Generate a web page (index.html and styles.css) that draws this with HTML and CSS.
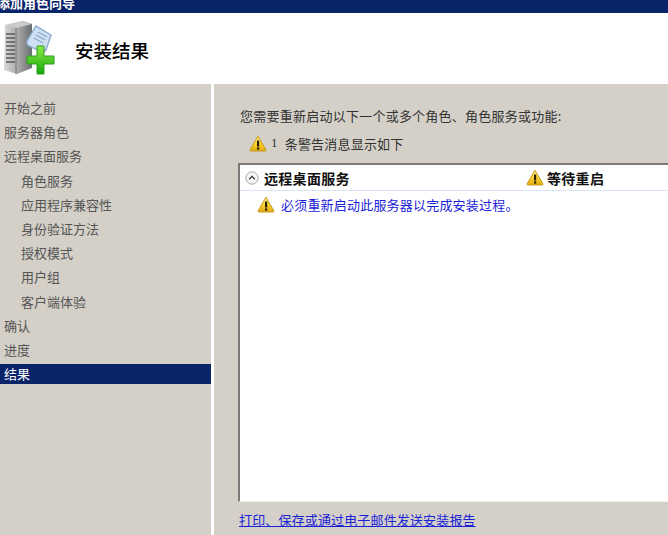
FILE: index.html
```html
<!DOCTYPE html>
<html lang="zh-CN">
<head>
<meta charset="utf-8">
<title>添加角色向导</title>
<link rel="stylesheet" href="styles.css">
</head>
<body>
<svg class="defs" width="0" height="0" aria-hidden="true">
  <defs>
    <linearGradient id="warn" x1="0" y1="0" x2="0" y2="1">
      <stop offset="0" stop-color="#fff3a0"/>
      <stop offset="0.55" stop-color="#f8d030"/>
      <stop offset="1" stop-color="#e2a910"/>
    </linearGradient>
    <symbol id="warning" viewBox="0 0 18 17">
      <path d="M9 1.2 L17 15 Q17.2 16 16 16 L2 16 Q.8 16 1 15 Z" fill="url(#warn)" stroke="#c79a18" stroke-width="1" stroke-linejoin="round"/>
      <rect x="8" y="5.5" width="2.2" height="6" fill="#2a2000"/>
      <rect x="8" y="12.4" width="2.2" height="2.2" fill="#2a2000"/>
    </symbol>
  </defs>
</svg>
<div class="window">
  <div class="titlebar"><span class="titletext">添加角色向导</span></div>
  <header class="header">
    <svg class="logo" width="54" height="56" viewBox="0 0 54 56" aria-hidden="true">
      <defs>
        <linearGradient id="srv" x1="0" y1="0" x2="1" y2="0">
          <stop offset="0" stop-color="#d8d8d8"/>
          <stop offset="0.55" stop-color="#a2a2a2"/>
          <stop offset="1" stop-color="#6a6e72"/>
        </linearGradient>
        <linearGradient id="grn" x1="0" y1="0" x2="0" y2="1">
          <stop offset="0" stop-color="#8cec44"/>
          <stop offset="1" stop-color="#14a80e"/>
        </linearGradient>
      </defs>
      <path d="M2 5 L20 1 L29 4 L29 48 L14 54 L1 50 Z" fill="url(#srv)"/>
      <path d="M2 5 L20 1 L29 4 L13 8 Z" fill="#c9cbcd"/>
      <path d="M3 14h9M3 18h9M3 22h9M3 26h9M3 30h9M3 34h9M3 38h9M3 42h9" stroke="#5a5a5a" stroke-width="1.6"/>
      <path d="M13 8 L13 54" stroke="#777" stroke-width="1"/>
      <path d="M24 21 L33 6 L48 15 L43 30 Q41 33 37 31 L26 26 Q23 24 24 21 Z" fill="#cfe0f2" stroke="#8eaacb" stroke-width="1.4"/>
      <path d="M31 18l9 5M33 15l9 5M35 12l9 5" stroke="#8eaacb" stroke-width="1.3"/>
      <path d="M34 26 h7 v10 h10 v8 h-10 v10 h-7 v-10 h-10 v-8 h10 Z" fill="url(#grn)" stroke="#2f9d1f" stroke-width="1"/>
    </svg>
    <h1 class="pagetitle">安装结果</h1>
  </header>
  <div class="main">
    <nav class="sidebar">
      <div class="step">开始之前</div>
      <div class="step">服务器角色</div>
      <div class="step">远程桌面服务</div>
      <div class="step sub">角色服务</div>
      <div class="step sub">应用程序兼容性</div>
      <div class="step sub">身份验证方法</div>
      <div class="step sub">授权模式</div>
      <div class="step sub">用户组</div>
      <div class="step sub">客户端体验</div>
      <div class="step">确认</div>
      <div class="step">进度</div>
      <div class="step current">结果</div>
    </nav>
    <section class="content">
      <p class="intro">您需要重新启动以下一个或多个角色、角色服务或功能:</p>
      <p class="warncount">
        <svg class="warnicon" width="18" height="17"><use href="#warning"/></svg>
        <span class="num">1</span><span>条警告消息显示如下</span>
      </p>
      <div class="results">
        <div class="resulthead">
          <svg class="collapse" width="14" height="14" viewBox="0 0 14 14" aria-hidden="true">
            <circle cx="7" cy="7" r="6.2" fill="#f4f4f4" stroke="#a8a8a8"/>
            <path d="M4.2 8.2 L7 5.4 L9.8 8.2" fill="none" stroke="#333" stroke-width="1.3"/>
          </svg>
          <span class="rolename">远程桌面服务</span>
          <svg class="warnicon" width="18" height="17"><use href="#warning"/></svg>
          <span class="rolestate">等待重启</span>
        </div>
        <div class="resultmsg">
          <svg class="warnicon" width="18" height="17"><use href="#warning"/></svg>
          <span>必须重新启动此服务器以完成安装过程。</span>
        </div>
      </div>
      <a class="reportlink" href="#">打印、保存或通过电子邮件发送安装报告</a>
    </section>
  </div>
</div>
</body>
</html>
```
FILE: styles.css
```css
html, body {
  margin: 0;
  padding: 0;
  height: 100%;
  overflow: hidden;
}
body {
  background: #d4d0c8;
  font-family: "Noto Sans CJK SC", "Liberation Sans", sans-serif;
  font-size: 13px;
  color: #333;
}
.defs { display: block; height: 0; }
.window {
  display: flex;
  flex-direction: column;
  height: 535px;
  width: 668px;
}
.titlebar {
  height: 13px;
  flex: none;
  background: #0a246a;
  overflow: hidden;
  color: #fff;
  font-weight: 700;
  font-size: 13px;
  line-height: 13px;
}
.titletext {
  display: block;
  margin: -5px 0 0 -3px;
  line-height: 15px;
}
.header {
  flex: none;
  height: 71px;
  background: #fff;
  display: flex;
  align-items: center;
  box-sizing: border-box;
  padding: 0 0 1px 3px;
}
.logo { flex: none; margin-right: 18px; }
.pagetitle {
  margin: 4px 0 0 0;
  font-size: 18.5px;
  font-weight: 500;
  color: #000;
  line-height: 24px;
}
.main {
  flex: 1;
  display: flex;
  min-height: 0;
}
.sidebar {
  flex: none;
  width: 211px;
  box-sizing: content-box;
  border-right: 3px solid #fff;
  padding-top: 14px;
  display: flex;
  flex-direction: column;
  row-gap: 4.2px;
}
.step {
  height: 20px;
  line-height: 20px;
  padding-left: 4px;
  color: #555;
}
.step.sub { padding-left: 21px; }
.step.current {
  background: #0a246a;
  color: #fff;
}
.content {
  flex: 1;
  min-width: 0;
  padding: 22px 0 0 24px;
  display: flex;
  flex-direction: column;
}
.intro {
  margin: 0 0 0 2px;
  line-height: 20px;
  height: 20px;
  color: #333;
  white-space: nowrap;
  letter-spacing: 0.24px;
}
.warncount {
  margin: 7px 0 0 11px;
  display: flex;
  align-items: center;
  height: 20px;
  color: #333;
  letter-spacing: 0.2px;
}
.num { margin: 0 7px 0 4px; font-family: "Liberation Serif", serif; }
.results {
  margin-top: 10px;
  height: 336px;
  flex: none;
  width: 440px;
  background: #fff;
  border-top: 2px solid #7a7a7a;
  border-left: 2px solid #7a7a7a;
  border-bottom: 1px solid #f0eee8;
  box-sizing: content-box;
}
.resulthead {
  height: 25px;
  display: flex;
  align-items: center;
  border-bottom: 1px solid #dbe6f4;
  box-sizing: content-box;
  font-weight: 700;
  font-size: 14px;
  letter-spacing: 0.3px;
  color: #111;
}
.collapse { margin-left: 5px; flex: none; }
.rolename { margin-left: 5px; width: 262px; flex: none; }
.rolestate { margin-left: 3px; }
.resultmsg {
  display: flex;
  align-items: center;
  height: 26px;
  padding-left: 17px;
  color: #1a22d8;
  letter-spacing: 0.2px;
}
.resultmsg span { margin-left: 6px; }
.warnicon { flex: none; }
.reportlink {
  margin: 9px 0 0 1px;
  align-self: flex-start;
  line-height: 18px;
  color: #1a22d8;
  text-decoration: underline;
  letter-spacing: 0.15px;
}
```
